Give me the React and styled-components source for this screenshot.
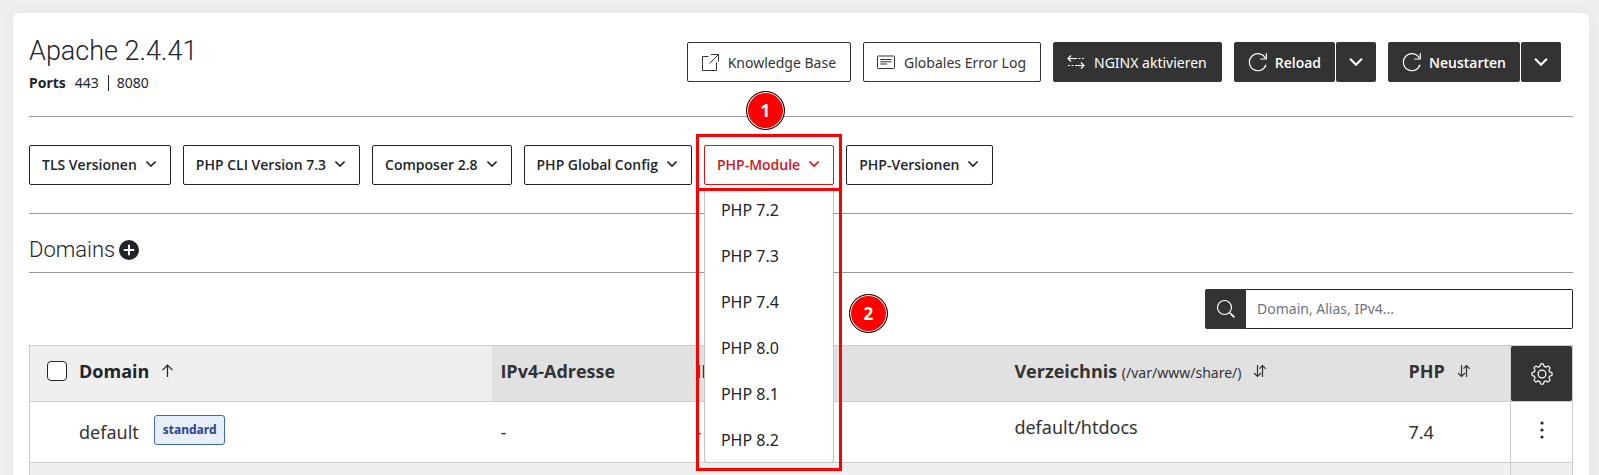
import React, { useState } from 'react';
import styled, { createGlobalStyle, css } from 'styled-components';

const PHP_MODULES = ['PHP 7.2', 'PHP 7.3', 'PHP 7.4', 'PHP 8.0', 'PHP 8.1', 'PHP 8.2'];

const ReloadIcon = () => (
    <Icon width="20" height="20" viewBox="0 0 20 20">
        <path d="M17.6 6.6A8.5 8.5 0 1 0 18 12.8" />
        <path d="M18.3 1.2V7H12.2" />
    </Icon>
);

const ExternalIcon = () => (
    <Icon width="18" height="18" viewBox="0 0 18 18" $stroke={1}>
        <path d="M7.5 3.5H1.5V17.5H15.5V9.5M8.5 10.5L17.5 1.5M10 1.5H17.5V8.5" />
    </Icon>
);

const LogIcon = () => (
    <Icon width="18" height="18" viewBox="0 0 18 18" $stroke={1}>
        <rect x="0.5" y="3" width="17" height="12.5" rx="0.8" />
        <path d="M3.3 6.5H14.5M3.3 8.8H14.5M3.3 11H10" />
    </Icon>
);

const SwapIcon = () => (
    <Icon width="18" height="18" viewBox="0 0 18 18" $stroke={1.2}>
        <path d="M4 2.5L1 5.5L4 8.5M1 5.5H10M14 9.5L17 12.5L14 15.5M17 12.5H8" />
        <path d="M11.5 5.5H17M6.5 12.5H1" strokeDasharray="2 1.5" />
    </Icon>
);

const ChevronIcon = ({ size = 14 }) => (
    <Icon width={size} height={size} viewBox="0 0 14 14" $stroke={1.7}>
        <path d="M2.4 4.5L7 9.1L11.6 4.5" />
    </Icon>
);

const SearchIcon = () => (
    <Icon width="20" height="20" viewBox="0 0 20 20">
        <circle cx="8.5" cy="8.5" r="7" />
        <path d="M13.5 13.5L15 15" />
        <path d="M14.8 14.8L18.4 18.4" strokeWidth="1.8" />
    </Icon>
);

const PlusIcon = () => (
    <Icon width="20" height="20" viewBox="0 0 20 20">
        <circle cx="10" cy="10" r="10" fill="#212529" stroke="none" />
        <path d="M10 4.8V15.2M4.8 10H15.2" stroke="#fff" strokeWidth="2" />
    </Icon>
);

const ArrowUpIcon = () => (
    <Icon width="12" height="14" viewBox="0 0 12 14">
        <path d="M6.5 13V1.5M1.5 6.2L6.5 1.2L11.5 6.2" />
    </Icon>
);

const SortIcon = () => (
    <Icon width="14" height="14" viewBox="0 0 14 14">
        <path d="M4.5 1V12.5M1 9L4.5 12.5L8 9M9.5 13V1.5M6.5 4.7L9.5 1.5L12.8 4.8" />
    </Icon>
);

const GearIcon = () => (
    <Icon width="22" height="22" viewBox="0 0 16 16" $stroke={0.9}>
        <circle cx="8" cy="8" r="2.8" />
        <path d="M6.7 1.7Q6.8 0.7 7.3 0.7H8.7Q9.2 0.7 9.3 1.7Q9.4 2.5 10.2 2.8Q11 3.1 11.6 2.6Q12.3 2 12.7 2.3L13.7 3.3Q14 3.7 13.4 4.4Q12.9 5 13.2 5.8Q13.5 6.6 14.3 6.7Q15.3 6.8 15.3 7.3V8.7Q15.3 9.2 14.3 9.3Q13.5 9.4 13.2 10.2Q12.9 11 13.4 11.6Q14 12.3 13.7 12.7L12.7 13.7Q12.3 14 11.6 13.4Q11 12.9 10.2 13.2Q9.4 13.5 9.3 14.3Q9.2 15.3 8.7 15.3H7.3Q6.8 15.3 6.7 14.3Q6.6 13.5 5.8 13.2Q5 12.9 4.4 13.4Q3.7 14 3.3 13.7L2.3 12.7Q2 12.3 2.6 11.6Q3.1 11 2.8 10.2Q2.5 9.4 1.7 9.3Q0.7 9.2 0.7 8.7V7.3Q0.7 6.8 1.7 6.7Q2.5 6.6 2.8 5.8Q3.1 5 2.6 4.4Q2 3.7 2.3 3.3L3.3 2.3Q3.7 2 4.4 2.6Q5 3.1 5.8 2.8Q6.6 2.5 6.7 1.7Z" />
    </Icon>
);

const DotsIcon = () => (
    <Icon width="20" height="20" viewBox="0 0 20 20">
        <g fill="#212529" stroke="none">
            <circle cx="10" cy="3" r="1.6" />
            <circle cx="10" cy="10" r="1.6" />
            <circle cx="10" cy="17" r="1.6" />
        </g>
    </Icon>
);

const Dropdown = ({ label }) => (
    <MenuButton type="button">
        {label}
        <ChevronIcon />
    </MenuButton>
);

const ModuleDropdown = () => {
    const [open, setOpen] = useState(true);

    return (
        <DropdownBox>
            <MenuButton type="button" $active aria-expanded={open} onClick={() => setOpen(!open)}>
                PHP-Module
                <ChevronIcon />
            </MenuButton>
            {open && (
                <Menu>
                    {PHP_MODULES.map(name => (
                        <li key={name}>
                            <MenuItem type="button">{name}</MenuItem>
                        </li>
                    ))}
                </Menu>
            )}
            <ButtonMark />
            <MenuMark />
            <StepOne>1</StepOne>
            <StepTwo>2</StepTwo>
        </DropdownBox>
    );
};

const App = () => {
    const [query, setQuery] = useState('');

    return (
        <>
            <GlobalStyle />
            <Panel>
                <Header>
                    <div>
                        <Title>Apache 2.4.41</Title>
                        <Ports>
                            <strong>Ports</strong>
                            <span>443</span>
                            <Port>8080</Port>
                        </Ports>
                    </div>
                    <Actions>
                        <ActionLink href="#knowledge-base">
                            <ExternalIcon />
                            Knowledge Base
                        </ActionLink>
                        <Action type="button">
                            <LogIcon />
                            Globales Error Log
                        </Action>
                        <Action type="button" $dark>
                            <SwapIcon />
                            NGINX aktivieren
                        </Action>
                        <Split>
                            <Action type="button" $dark $bold>
                                <ReloadIcon />
                                Reload
                            </Action>
                            <Toggle type="button" aria-label="Reload Optionen">
                                <ChevronIcon size={18} />
                            </Toggle>
                        </Split>
                        <Split>
                            <Action type="button" $dark $bold>
                                <ReloadIcon />
                                Neustarten
                            </Action>
                            <Toggle type="button" aria-label="Neustarten Optionen">
                                <ChevronIcon size={18} />
                            </Toggle>
                        </Split>
                    </Actions>
                </Header>
                <Toolbar>
                    <Dropdown label="TLS Versionen" />
                    <Dropdown label="PHP CLI Version 7.3" />
                    <Dropdown label="Composer 2.8" />
                    <Dropdown label="PHP Global Config" />
                    <ModuleDropdown />
                    <Dropdown label="PHP-Versionen" />
                </Toolbar>
                <SectionHead>
                    <SectionTitle>Domains</SectionTitle>
                    <IconButton type="button" aria-label="Domain hinzufügen">
                        <PlusIcon />
                    </IconButton>
                </SectionHead>
                <Search onSubmit={e => e.preventDefault()}>
                    <SearchButton type="submit" aria-label="Suchen">
                        <SearchIcon />
                    </SearchButton>
                    <SearchInput
                        type="text"
                        aria-label="Domain, Alias, IPv4"
                        placeholder="Domain, Alias, IPv4..."
                        value={query}
                        onChange={e => setQuery(e.target.value)}
                    />
                </Search>
                <Table>
                    <colgroup>
                        <Col $width="30%" />
                        <Col $width="195px" />
                        <Col $width="319px" />
                        <Col />
                        <Col $width="110px" />
                        <Col $width="62px" />
                    </colgroup>
                    <thead>
                        <HeadRow>
                            <Th $sorted>
                                <HeadCell $select>
                                    <Checkbox type="checkbox" aria-label="Alle auswählen" />
                                    Domain
                                    <ArrowUpIcon />
                                </HeadCell>
                            </Th>
                            <Th>IPv4-Adresse</Th>
                            <Th>IPv6-Adresse</Th>
                            <Th>
                                <HeadCell>
                                    <span>
                                        Verzeichnis <Hint>(/var/www/share/)</Hint>
                                    </span>
                                    <SortIcon />
                                </HeadCell>
                            </Th>
                            <Th>
                                <HeadCell>
                                    PHP
                                    <SortIcon />
                                </HeadCell>
                            </Th>
                            <ActionTh>
                                <Settings type="button" aria-label="Einstellungen">
                                    <GearIcon />
                                </Settings>
                            </ActionTh>
                        </HeadRow>
                    </thead>
                    <tbody>
                        <Row>
                            <Td>
                                <DomainCell>
                                    default
                                    <Tag>standard</Tag>
                                </DomainCell>
                            </Td>
                            <Td>-</Td>
                            <Td>-</Td>
                            <Td>
                                <Path>default/htdocs</Path>
                            </Td>
                            <Td>7.4</Td>
                            <ActionTd>
                                <IconButton type="button" aria-label="Aktionen">
                                    <DotsIcon />
                                </IconButton>
                            </ActionTd>
                        </Row>
                        <Row>
                            <Td colSpan={5} />
                            <ActionTd />
                        </Row>
                    </tbody>
                </Table>
            </Panel>
        </>
    );
};

const GlobalStyle = createGlobalStyle`
    * {
        box-sizing: border-box;
    }

    html {
        scrollbar-width: none;
    }

    body {
        margin: 0;
        padding: 13px 10px 0 13px;
        background: #eee;
        color: #212529;
        font-family: "Noto Sans", sans-serif;
        font-size: 14px;
    }

    button, input {
        font-family: inherit;
    }
`;

const boldFont = css`
    font-family: "Open Sans", "Noto Sans", sans-serif;
`;

const Icon = styled.svg`
    display: block;
    flex: none;
    fill: none;
    stroke: currentColor;
    stroke-width: ${props => props.$stroke || 1.2};
`;

const Panel = styled.main`
    padding: 16px;
    background: #fff;
    border-radius: 6px;
    box-shadow: 0 0 16px rgba(0, 0, 0, 0.04);
`;

const Header = styled.header`
    display: flex;
    justify-content: space-between;
    align-items: flex-start;
    padding: 4px 12px 23px 0;
    border-bottom: 1px solid #999;
`;

const Title = styled.h1`
    margin: 0 0 4px;
    font-family: Roboto, sans-serif;
    font-size: 27px;
    font-weight: 300;
    line-height: 36px;
`;

const Ports = styled.div`
    display: flex;
    align-items: center;
    gap: 9px;
    line-height: 20px;
`;

const Port = styled.span`
    padding-left: 8px;
    border-left: 1px solid #212529;
    line-height: 16px;
`;

const Actions = styled.div`
    display: flex;
    gap: 12px;
    padding-top: 9px;
`;

const actionStyle = css`
    display: flex;
    align-items: center;
    gap: ${props => props.$bold ? '7px' : '9px'};
    height: 40px;
    padding: 0 ${props => props.$bold ? '13px' : '14px'} 0 13px;
    background: ${props => props.$dark ? '#333' : '#fff'};
    border: 1px solid #333;
    border-radius: 2px;
    color: ${props => props.$dark ? '#fff' : '#333'};
    font-size: 14px;
    font-weight: ${props => props.$bold ? 600 : 400};
    text-decoration: none;
    white-space: nowrap;
    cursor: pointer;
    ${props => props.$bold && boldFont}
`;

const Action = styled.button`
    ${actionStyle}
`;

const ActionLink = styled.a`
    ${actionStyle}
`;

const Split = styled.div`
    display: flex;
    gap: 1px;
`;

const Toggle = styled.button`
    display: flex;
    align-items: center;
    justify-content: center;
    width: 40px;
    padding: 0;
    background: #333;
    border: none;
    border-radius: 2px;
    color: #fff;
    cursor: pointer;
`;

const Toolbar = styled.div`
    display: flex;
    gap: 12px;
    padding: 28px 0;
    border-bottom: 1px solid #999;
`;

const MenuButton = styled.button`
    ${boldFont}
    display: flex;
    align-items: center;
    gap: 7px;
    height: 40px;
    padding: 0 12px 2px;
    background: #fff;
    border: 1px solid ${props => props.$active ? '#d7141a' : '#212529'};
    border-radius: 2px;
    color: ${props => props.$active ? '#d7141a' : '#212529'};
    font-size: 14px;
    font-weight: 600;
    white-space: nowrap;
    cursor: pointer;
`;

const DropdownBox = styled.div`
    position: relative;
`;

const Menu = styled.ul`
    position: absolute;
    top: 100%;
    left: 0;
    right: 0;
    z-index: 1;
    margin: 0;
    padding: 1px 0 0;
    background: #fff;
    border: 1px solid #c4c4c4;
    border-top: none;
    border-radius: 4px;
    list-style: none;
`;

const MenuItem = styled.button`
    display: block;
    width: 100%;
    height: 46px;
    padding: 2px 16px 0;
    background: none;
    border: none;
    color: #212529;
    font-size: 16px;
    text-align: left;
    cursor: pointer;
`;

const Mark = styled.div`
    position: absolute;
    left: -8px;
    right: -8px;
    z-index: 2;
    border: 3px solid #f00;
    pointer-events: none;
`;

const ButtonMark = styled(Mark)`
    top: -11px;
    height: 57px;
`;

const MenuMark = styled(Mark)`
    top: 43px;
    height: 283px;
`;

const Step = styled.span`
    ${boldFont}
    position: absolute;
    z-index: 3;
    display: flex;
    align-items: center;
    justify-content: center;
    width: 39px;
    height: 39px;
    background: #f00;
    border: 1px solid #000;
    border-radius: 50%;
    box-shadow: inset 0 0 0 1px #fff;
    color: #fff;
    font-size: 17px;
    font-weight: 700;
`;

const StepOne = styled(Step)`
    top: -54px;
    left: 42px;
`;

const StepTwo = styled(Step)`
    top: 149px;
    left: 145px;
`;

const SectionHead = styled.div`
    display: flex;
    gap: 4px;
    padding: 20px 0 6px;
    border-bottom: 1px solid #999;
`;

const SectionTitle = styled.h2`
    margin: 0;
    font-family: Roboto, sans-serif;
    font-size: 22px;
    font-weight: 300;
    line-height: 32px;
`;

const IconButton = styled.button`
    display: inline-flex;
    align-items: center;
    justify-content: center;
    padding: 0;
    background: none;
    border: none;
    color: #212529;
    cursor: pointer;
`;

const Search = styled.form`
    display: flex;
    width: 368px;
    height: 40px;
    margin: 16px 0 16px auto;
`;

const SearchButton = styled.button`
    display: flex;
    align-items: center;
    justify-content: center;
    width: 41px;
    padding: 0;
    background: #333;
    border: none;
    border-radius: 2px 0 0 2px;
    color: #fff;
    cursor: pointer;
`;

const SearchInput = styled.input`
    flex: 1;
    min-width: 0;
    padding: 0 11px 2px;
    border: 1px solid #212529;
    border-left: none;
    border-radius: 0 2px 2px 0;
    font-size: 14px;
    outline: none;

    &::placeholder {
        color: #6c757d;
    }
`;

const Table = styled.table`
    width: 100%;
    table-layout: fixed;
    border-collapse: collapse;
    border: 1px solid #ccc;
    color: #333;
    font-size: 18px;
`;

const Col = styled.col`
    width: ${props => props.$width || 'auto'};
`;

const HeadRow = styled.tr`
    height: 56px;
    border-bottom: 1px solid #ccc;
`;

const Th = styled.th`
    ${boldFont}
    padding: 0 8px 5px;
    background: ${props => props.$sorted ? '#efefef' : '#e1e1e1'};
    color: ${props => props.$sorted ? '#212529' : '#333'};
    font-weight: 700;
    text-align: left;
    white-space: nowrap;
`;

const HeadCell = styled.div`
    display: flex;
    align-items: center;
    gap: 12px;
    padding-left: ${props => props.$select ? '9px' : '0'};
`;

const Hint = styled.small`
    font-family: "Noto Sans", sans-serif;
    font-size: 14px;
    font-weight: 400;
`;

const Checkbox = styled.input`
    appearance: none;
    width: 20px;
    height: 20px;
    margin: 0;
    background: #fff;
    border: 1px solid #212529;
    border-radius: 4px;
`;

const ActionTh = styled.th`
    height: 55px;
    padding: 0;
    border-left: 1px solid #ccc;
    background: #e1e1e1;
`;

const Settings = styled.button`
    display: flex;
    align-items: center;
    justify-content: center;
    width: 100%;
    height: 55px;
    padding: 0;
    background: #333;
    border: none;
    border-radius: 2px;
    color: #fff;
    cursor: pointer;
`;

const Row = styled.tr`
    height: 61px;
    border-bottom: 1px solid #ccc;

    &:nth-child(even) {
        background: #efefef;
    }
`;

const Td = styled.td`
    padding: 0 8px;
`;

const ActionTd = styled.td`
    padding: 0;
    border-left: 1px solid #ccc;
    text-align: center;
    vertical-align: middle;
`;

const DomainCell = styled.div`
    display: flex;
    align-items: center;
    gap: 15px;
    padding-left: 41px;
`;

const Tag = styled.span`
    height: 30px;
    margin-bottom: 4px;
    padding: 0 8px;
    background: #e6eef9;
    border: 1px solid #3f68b5;
    border-radius: 3px;
    color: #2a4590;
    font-size: 12px;
    font-weight: 700;
    line-height: 28px;
`;

const Path = styled.div`
    padding-bottom: 11px;
`;

export default App;
